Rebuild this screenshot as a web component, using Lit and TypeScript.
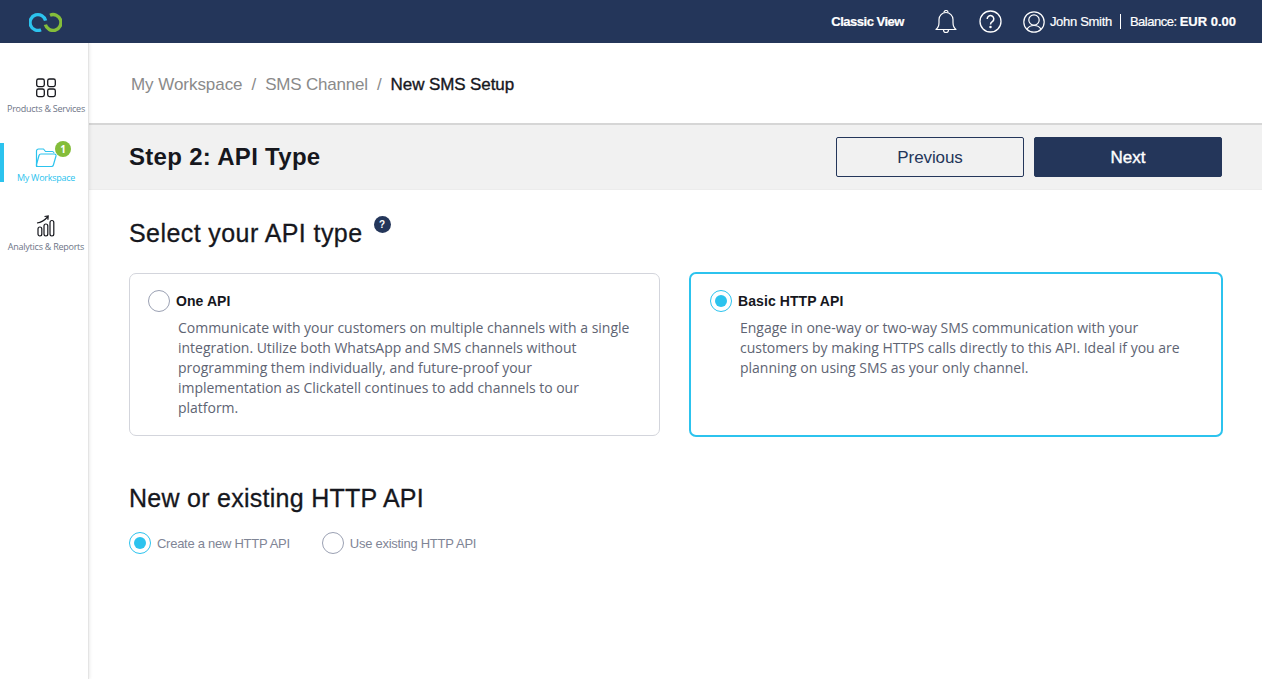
import { LitElement, html, css } from "lit";
import { customElement } from "lit/decorators.js";

const radio = (on: boolean) => html`<span class="radio ${on ? "on" : ""}"></span>`;

@customElement("app-root")
export class AppRoot extends LitElement {
  static styles = css`
    :host { display: block; width: 1262px; height: 679px; overflow: hidden; font-family: "Liberation Sans", Arial, sans-serif; background: #fff; color: #16171d; }
    * { box-sizing: border-box; }
    .top { height: 43px; background: #24365a; display: flex; align-items: center; color: #fff; padding: 0 26px 0 29px; }
    .logo { display: block; }
    .top-right { margin-left: auto; display: flex; align-items: center; font-size: 13px; letter-spacing: -0.3px; -webkit-text-stroke: 0.2px #fff; }
    .classic { font-weight: 700; margin-right: 31px; letter-spacing: -0.5px; }
    .bell { margin-right: 22px; display: block; }
    .help { margin-right: 21px; display: block; }
    .user { margin-right: 5px; display: block; }
    .sep { width: 1px; height: 15px; background: #fff; margin: 0 9px 0 8px; }
    .bal { letter-spacing: -0.5px; }
    .bal b { font-weight: 700; letter-spacing: 0; }
    .main { display: flex; height: 636px; }
    .side { width: 89px; flex: none; border-right: 1px solid #e4e4e4; box-shadow: 1px 0 3px rgba(0,0,0,.08); padding-top: 31px; font-family: "Open Sans", sans-serif; font-size: 9px; position: relative; z-index: 1; background: #fff; }
    .nav { height: 69px; padding-left: 4px; display: flex; flex-direction: column; align-items: center; color: #6e7587; position: relative; letter-spacing: -0.25px; white-space: nowrap; }
    .nav svg { display: block; height: 28px; }
    .nav.active { color: #2cc3ee; }
    .nav.active::before { content: ""; position: absolute; left: 0; top: 0; width: 4px; height: 39px; background: #2cc3ee; }
    .badge { position: absolute; left: 55px; top: -2px; width: 16px; height: 16px; border-radius: 50%; background: #84bd3a; color: #fff; font: 700 10px/16px "Open Sans", sans-serif; text-align: center; }
    .content { flex: 1; min-width: 0; }
    .crumbs { height: 80px; padding: 32px 0 0 42px; font-size: 17px; line-height: 20px; color: #8a8a8a; display: flex; gap: 9px; letter-spacing: -0.05px; }
    .crumbs .sms { letter-spacing: -0.2px; }
    .crumbs b { color: #16171d; font-weight: 400; -webkit-text-stroke: 0.35px #16171d; letter-spacing: -0.1px; }
    .bar { height: 67px; border-top: 2px solid #d6d6d6; border-bottom: 1px solid #ececec; background: #f1f1f1; display: flex; align-items: center; padding: 0 40px; }
    h1 { font-size: 24px; font-weight: 700; margin: 0; flex: 1; letter-spacing: 0.3px; }
    .btn { width: 188px; height: 40px; padding-top: 1px; border-radius: 2px; border: 1px solid #24365a; font-size: 17px; display: flex; align-items: center; justify-content: center; color: #24365a; letter-spacing: -0.1px; }
    .btn.primary { background: #24365a; color: #fff; margin-left: 10px; -webkit-text-stroke: 0.4px #fff; letter-spacing: 0; }
    .body { padding: 0 39px 0 40px; }
    h2 { font-size: 25px; font-weight: 400; margin: 0; line-height: 28px; -webkit-text-stroke: 0.3px #16171d; letter-spacing: 0.27px; }
    .t1 h2 { letter-spacing: 0.42px; }
    .t1 { display: flex; padding-top: 29px; height: 82px; }
    .q { width: 17px; height: 17px; border-radius: 50%; background: #24365a; color: #fff; font-size: 10px; font-weight: 700; line-height: 17px; text-align: center; margin: -3px 0 0 11px; }
    .cards { display: grid; grid-template-columns: 531px 534px; gap: 29px; align-items: center; }
    .card { border: 1px solid #d3d5dc; border-radius: 7px; height: 163px; padding: 16px 24px 16px 18px; }
    .card.sel { border: 2px solid #2cc3ee; height: 165px; padding: 16px 18px 0 19px; }
    .rt { display: flex; align-items: center; gap: 6px; font-size: 14px; font-weight: 700; height: 22px; letter-spacing: 0.08px; }
    .radio { width: 22px; height: 22px; flex: none; border-radius: 50%; border: 1px solid #9ba1b3; background: #fff; position: relative; display: block; }
    .radio.on { border-color: #2cc3ee; }
    .radio.on::after { content: ""; position: absolute; inset: 4px; border-radius: 50%; background: #2cc3ee; }
    .card p { margin: 6px 0 0 30px; font: 14px/20px "Open Sans", sans-serif; color: #5e6473; letter-spacing: -0.02px; }
    .t2 { margin-top: 47px; }
    .opts { display: flex; margin-top: 20px; font-size: 13px; color: #7f8596; letter-spacing: -0.27px; }
    .opt { display: flex; align-items: center; gap: 6px; margin-right: 32px; }
  `;

  render() {
    return html`
      <div class="top">
        <svg class="logo" width="33" height="20" viewBox="0 0 33 20" fill="none" stroke-width="3.4">
          <path d="M12 17.800A7.900 7.900 0 1 1 16.600 8.600" stroke="#2cc3ee" />
          <path d="M21 3.200A7.900 7.900 0 1 1 16.400 12.600" stroke="#84bd3a" />
        </svg>
        <div class="top-right">
          <span class="classic">Classic View</span>
          <svg class="bell" width="22" height="24" viewBox="0 0 22 24" fill="none" stroke="#fff" stroke-width="1.200">
            <path d="M1 19.500c2-1.600 3-3.500 3-7V9.500a7 7 0 0 1 14 0V12.500c0 3.500 1 5.400 3 7z" stroke-linejoin="round"/>
            <path d="M9 2.500a2 2 0 0 1 4 0M8.500 20a2.500 2.500 0 0 0 5 0"/>
          </svg>
          <svg class="help" width="23" height="23" viewBox="0 0 23 23" fill="none" stroke="#fff" stroke-width="1.300">
            <circle cx="11.500" cy="11.500" r="10.500"/>
            <path d="M8.200 9a3.300 3.300 0 1 1 5.100 2.700c-1.200.8-1.800 1.400-1.800 2.800" stroke-width="1.500"/>
            <circle cx="11.500" cy="17" r=".6" fill="#fff"/>
          </svg>
          <svg class="user" width="22" height="22" viewBox="0 0 22 22" fill="none" stroke="#fff" stroke-width="1.200">
            <circle cx="11" cy="11" r="10.200"/>
            <circle cx="11" cy="9" r="5.200"/>
            <path d="M4 18.300c1.500-2.700 4-3.800 7-3.800s5.500 1.100 7 3.800"/>
          </svg>
          <span>John Smith</span>
          <span class="sep"></span>
          <span class="bal">Balance: <b>EUR 0.00</b></span>
        </div>
      </div>
      <div class="main">
        <div class="side">
          <div class="nav">
            <svg width="22" height="28" viewBox="0 0 22 28" fill="none" stroke="#16171d" stroke-width="1.300">
              <rect x="1.700" y="5" width="7.600" height="7.600" rx="1.800"/><rect x="12.700" y="5" width="7.600" height="7.600" rx="1.800"/>
              <rect x="1.700" y="15" width="7.600" height="7.600" rx="1.800"/><rect x="12.700" y="15" width="7.600" height="7.600" rx="1.800"/>
            </svg>
            Products &amp; Services
          </div>
          <div class="nav active">
            <svg width="22" height="28" viewBox="0 0 22 28" fill="none" stroke="#2cc3ee" stroke-width="1.200" stroke-linejoin="round">
              <path d="M3 23.500H1.500V8a2 2 0 0 1 2-2h5l2 2.500h7a2 2 0 0 1 1.500 1.500"/>
              <path d="M6 11h13.500a1.600 1.600 0 0 1 1.500 2l-2.600 9a2 2 0 0 1-2 1.500H3a1.500 1.500 0 0 1-1.500-2L4 12.500A2 2 0 0 1 6 11z"/>
            </svg>
            <span class="badge">1</span>
            My Workspace
          </div>
          <div class="nav">
            <svg width="20" height="28" viewBox="0 0 20 28" fill="none" stroke="#16171d" stroke-width="1.200">
              <rect x="2" y="15" width="3.800" height="9" rx="1.900"/><rect x="8" y="12" width="3.800" height="12" rx="1.900"/><rect x="14" y="8.500" width="3.800" height="15.500" rx="1.900"/>
              <path d="M1 11c4-.5 7-2 10.500-6M8.500 4.500l3.700-.5-.3 3.700"/>
            </svg>
            Analytics &amp; Reports
          </div>
        </div>
        <div class="content">
          <div class="crumbs"><span>My Workspace</span><span>/</span><span class="sms">SMS Channel</span><span>/</span><b>New SMS Setup</b></div>
          <div class="bar">
            <h1>Step 2: API Type</h1>
            <div class="btn">Previous</div>
            <div class="btn primary">Next</div>
          </div>
          <div class="body">
            <div class="t1"><h2>Select your API type</h2><div class="q">?</div></div>
            <div class="cards">
              <div class="card">
                <div class="rt">${radio(false)}One API</div>
                <p>Communicate with your customers on multiple channels with a single integration. Utilize both WhatsApp and SMS channels without programming them individually, and future-proof your implementation as Clickatell continues to add channels to our platform.</p>
              </div>
              <div class="card sel">
                <div class="rt">${radio(true)}Basic HTTP API</div>
                <p>Engage in one-way or two-way SMS communication with your customers by making HTTPS calls directly to this API. Ideal if you are planning on using SMS as your only channel.</p>
              </div>
            </div>
            <h2 class="t2">New or existing HTTP API</h2>
            <div class="opts">
              <div class="opt">${radio(true)}Create a new HTTP API</div>
              <div class="opt">${radio(false)}Use existing HTTP API</div>
            </div>
          </div>
        </div>
      </div>
    `;
  }
}
